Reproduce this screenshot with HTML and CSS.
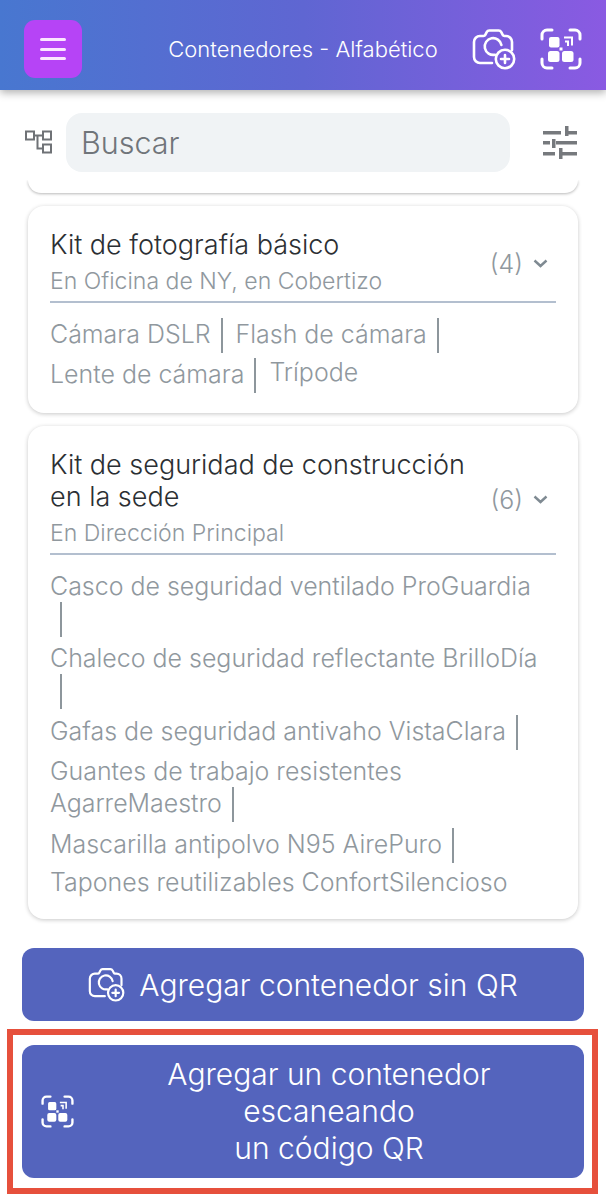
FILE: index.html
```html
<!DOCTYPE html>
<html lang="es">
<head>
<meta charset="utf-8">
<title>Contenedores</title>
<link rel="stylesheet" href="styles.css">
</head>
<body>
<svg class="defs" width="0" height="0" aria-hidden="true">
  <defs>
    <symbol id="cam" viewBox="0 0 44 42">
      <path d="M20 35H8a6 6 0 0 1-6-6V14a6 6 0 0 1 6-6h3.500a2 2 0 0 0 1.800-1.100l1.400-2.800A3 3 0 0 1 17.400 2.500h9.200a3 3 0 0 1 2.700 1.600l1.400 2.800A2 2 0 0 0 32.500 8H34a6 6 0 0 1 6 6v8" fill="none" stroke="currentColor" stroke-width="2.600" stroke-linecap="round"/>
      <path d="M23 26.700A8.400 8.400 0 1 1 29.400 17" fill="none" stroke="currentColor" stroke-width="2.600" stroke-linecap="round"/>
      <circle cx="33" cy="31" r="9.200" fill="none" stroke="currentColor" stroke-width="2.600"/>
      <path d="M33 27v8M29 31h8" fill="none" stroke="currentColor" stroke-width="2.600" stroke-linecap="round"/>
    </symbol>
    <symbol id="qr" viewBox="0 0 42 42">
      <path d="M2 11V7a5 5 0 0 1 5-5h5M30 2h5a5 5 0 0 1 5 5v4M40 31v4a5 5 0 0 1-5 5h-5M12 40H7a5 5 0 0 1-5-5v-4" fill="none" stroke="currentColor" stroke-width="3" stroke-linecap="round"/>
      <rect x="9" y="9" width="10.500" height="10.500" rx="2" fill="currentColor"/>
      <rect x="8" y="23" width="11.500" height="11" rx="2.500" fill="currentColor"/>
      <rect x="22" y="23" width="11.500" height="11" rx="2.500" fill="currentColor"/>
      <rect x="19.500" y="19.500" width="3" height="3" fill="currentColor"/>
      <path d="M24 9.500h8v8M25 13.500h3V18" fill="none" stroke="currentColor" stroke-width="2"/>
    </symbol>
  </defs>
</svg>
<div class="app">
  <header class="topbar">
    <button class="menu-btn" aria-label="Menú">
      <span class="menu-line"></span><span class="menu-line"></span><span class="menu-line"></span>
    </button>
    <h1 class="topbar-title">Contenedores - Alfabético</h1>
    <div class="topbar-actions">
      <svg class="top-icon-cam"><use href="#cam"/></svg>
      <svg class="top-icon-qr"><use href="#qr"/></svg>
    </div>
  </header>

  <div class="search-row">
    <svg class="tree-icon" viewBox="0 0 27 24" fill="none" stroke="currentColor" stroke-width="2">
      <rect x="1" y="1.500" width="8" height="8"/>
      <rect x="18" y="1.500" width="8" height="8"/>
      <rect x="18" y="14.500" width="8" height="8"/>
      <path d="M9 5.500h9M12.500 5.500V18.500H18"/>
    </svg>
    <div class="search-box">Buscar</div>
    <svg class="filter-icon" viewBox="0 0 34 33" fill="currentColor">
      <rect x="0" y="5" width="18" height="3.500"/>
      <rect x="23" y="5" width="11" height="3.500"/>
      <rect x="22" y="0" width="3.500" height="10"/>
      <rect x="0" y="15" width="7" height="3.500"/>
      <rect x="13" y="15" width="21" height="3.500"/>
      <rect x="9" y="13" width="3.500" height="9"/>
      <rect x="0" y="26" width="12" height="3.500"/>
      <rect x="18" y="26" width="16" height="3.500"/>
      <rect x="16" y="22" width="3.500" height="11"/>
    </svg>
  </div>

  <main class="list">
    <div class="card-stub"></div>

    <section class="card">
      <div class="card-head">
        <div class="card-names">
          <h2 class="card-title">Kit de fotografía básico</h2>
          <p class="card-place">En Oficina de NY, en Cobertizo</p>
        </div>
        <span class="card-count">(4)</span>
        <svg class="chevron" viewBox="0 0 15 9" fill="none" stroke="currentColor" stroke-width="2.400"><path d="M1.500 1.500l6 5.500 6-5.500"/></svg>
      </div>
      <div class="items">
        <span class="item">Cámara DSLR<i class="bar"></i></span>
        <span class="item">Flash de cámara<i class="bar"></i></span>
        <span class="item">Lente de cámara<i class="bar"></i></span>
        <span class="item item-last">Trípode</span>
      </div>
    </section>

    <section class="card">
      <div class="card-head">
        <div class="card-names">
          <h2 class="card-title">Kit de seguridad de construcción en la sede</h2>
          <p class="card-place">En Dirección Principal</p>
        </div>
        <span class="card-count">(6)</span>
        <svg class="chevron" viewBox="0 0 15 9" fill="none" stroke="currentColor" stroke-width="2.400"><path d="M1.500 1.500l6 5.500 6-5.500"/></svg>
      </div>
      <div class="items">
        <span class="item">Casco de seguridad ventilado ProGuardia<i class="bar"></i></span>
        <span class="item">Chaleco de seguridad reflectante BrilloDía<i class="bar"></i></span>
        <span class="item">Gafas de seguridad antivaho VistaClara<i class="bar"></i></span>
        <span class="item">Guantes de trabajo resistentes AgarreMaestro<i class="bar"></i></span>
        <span class="item">Mascarilla antipolvo N95 AirePuro<i class="bar"></i></span>
        <span class="item item-last">Tapones reutilizables ConfortSilencioso</span>
      </div>
    </section>
  </main>

  <footer class="actions">
    <button class="action action-single">
      <svg class="action-cam"><use href="#cam"/></svg>
      <span>Agregar contenedor sin QR</span>
    </button>
    <div class="highlight">
      <button class="action action-multi">
        <svg class="action-qr"><use href="#qr"/></svg>
        <span class="action-text">Agregar un contenedor escaneando<br>un código QR</span>
      </button>
    </div>
  </footer>
</div>
</body>
</html>
```
FILE: styles.css
```css
* { box-sizing: border-box; }
html, body { margin: 0; padding: 0; }
body {
  font-family: Inter, "Noto Sans", sans-serif;
  background: #fff;
  color: #2b2f33;
}
.defs { position: absolute; }
.app {
  width: 606px;
  height: 1198px;
  overflow: hidden;
  display: flex;
  flex-direction: column;
}
.topbar {
  height: 90px;
  flex: none;
  display: flex;
  align-items: center;
  position: relative;
  padding: 8px 24px 0;
  color: #fff;
  background: linear-gradient(90deg, #4877d0 0%, #5f66d2 50%, #8a5ae2 100%);
  box-shadow: 0 3px 8px rgba(0, 0, 0, .3);
  z-index: 2;
}
.menu-btn {
  width: 58px;
  height: 58px;
  border: 0;
  border-radius: 11px;
  background: #b644f6;
  display: flex;
  flex-direction: column;
  align-items: center;
  justify-content: center;
  gap: 6.500px;
  padding: 0;
}
.menu-line {
  width: 26px;
  height: 3px;
  border-radius: 2px;
  background: #fbe6ff;
}
.topbar-title {
  position: absolute;
  left: 0;
  right: 0;
  margin: 0;
  text-align: center;
  font-size: 22px;
  font-weight: 350;
  pointer-events: none;
}
.topbar-actions {
  margin-left: auto;
  display: flex;
  align-items: center;
  gap: 24px;
}
.top-icon-cam { width: 44px; height: 42px; }
.top-icon-qr { width: 42px; height: 42px; }
.search-row {
  flex: none;
  height: 90px;
  padding: 23px 28px 8px 25px;
  display: flex;
  align-items: flex-start;
}
.tree-icon {
  width: 27px;
  height: 24px;
  margin-top: 17px;
  color: #6f7276;
  flex: none;
}
.search-box {
  width: 444px;
  height: 59px;
  margin-left: 14px;
  border-radius: 16px;
  background: #f0f3f5;
  color: #70757a;
  font-size: 30.500px;
  font-weight: 350;
  line-height: 60px;
  padding-left: 15px;
  flex: none;
}
.filter-icon {
  width: 34px;
  height: 33px;
  margin: 13px 0 0 33px;
  color: #76797d;
  flex: none;
}
.list {
  flex: none;
  height: 768px;
  padding: 0 28px;
  display: flex;
  flex-direction: column;
  gap: 13px;
}
.card-stub {
  flex: none;
  height: 13px;
  background: #fff;
  border-radius: 0 0 16px 16px;
  box-shadow: 0 1px 3px rgba(0, 0, 0, .28);
  clip-path: inset(0 -6px -6px -6px);
}
.card {
  flex: none;
  background: #fff;
  border-radius: 16px;
  box-shadow: 0 1px 4px rgba(0, 0, 0, .22);
  padding: 23px 22px 19.500px;
}
.card-head {
  display: flex;
  align-items: center;
  border-bottom: 2px solid #b3bfcf;
  padding-bottom: 4px;
}
.card-names { flex: 1; min-width: 0; padding-right: 20px; }
.card-title {
  margin: 0;
  font-size: 27px;
  line-height: 32.500px;
  font-weight: 350;
  color: #2b2f33;
}
.card-place {
  margin: 4px 0 0;
  font-size: 23.050px;
  font-weight: 350;
  line-height: 31px;
  color: #90989e;
}
.card-count {
  font-size: 25px;
  font-weight: 350;
  color: #90989e;
  flex: none;
  padding-top: 3px;
}
.chevron {
  width: 15px;
  height: 9px;
  margin: 2px 8px 0 10px;
  color: #7f8a92;
  flex: none;
}
.items {
  display: flex;
  flex-wrap: wrap;
  align-items: flex-start;
  row-gap: 5.500px;
  margin-top: 15px;
  padding-right: 2px;
}
.item {
  display: block;
  font-size: 24.950px;
  font-weight: 350;
  line-height: 32px;
  color: #90989e;
}
.item-last {
  margin: -2px 0 1px;
}
.bar {
  display: inline-block;
  width: 2px;
  height: 35px;
  margin: 0 13px 0 10px;
  vertical-align: -9.900px;
  background: #8d969c;
}
.actions {
  flex: none;
  display: flex;
  flex-direction: column;
}
.action {
  display: flex;
  align-items: center;
  width: 562px;
  border: 0;
  border-radius: 12px;
  background: #5464bd;
  color: #fff;
  font-family: inherit;
  font-size: 30px;
  font-weight: 350;
  padding: 0;
}
.action-single {
  height: 73px;
  margin: 0 22px;
  justify-content: center;
  gap: 14px;
}
.action-cam { width: 37px; height: 35px; }
.highlight {
  margin: 8px 7px 0;
  border: 6px solid #e6503c;
  padding: 10px 8px 10px 9px;
  width: 591px;
}
.action-multi {
  height: 133px;
  padding-left: 19px;
}
.action-qr { width: 33px; height: 33px; flex: none; }
.action-text {
  flex: 1;
  text-align: center;
  line-height: 37px;
  padding: 0 50px;
}
```
